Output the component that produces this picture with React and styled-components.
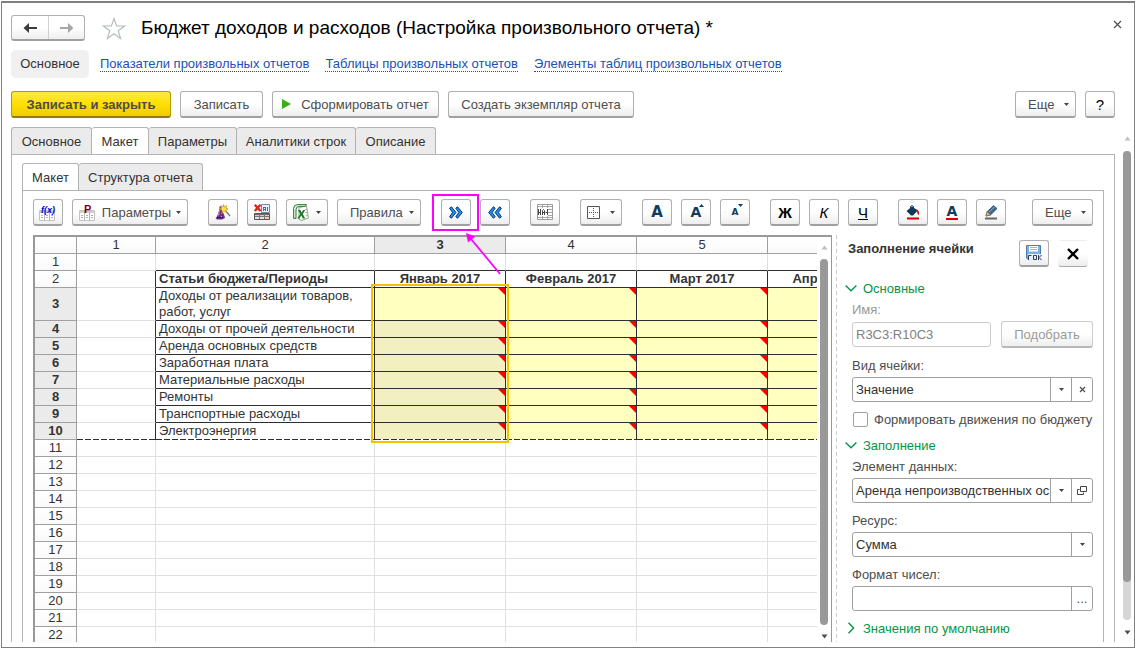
import { useState } from "react"
import styled, { createGlobalStyle, css } from "styled-components"

const months = ['Январь 2017', 'Февраль 2017', 'Март 2017', 'Апрель 2017']

const articles = [
    'Доходы от реализации товаров, работ, услуг',
    'Доходы от прочей деятельности',
    'Аренда основных средств',
    'Заработная плата',
    'Материальные расходы',
    'Ремонты',
    'Транспортные расходы',
    'Электроэнергия',
]

const emptyRows = Array.from({ length: 12 }, (_, i) => i + 11)

export default function App() {
    const [movements, setMovements] = useState(false)

    return (
        <>
            <GlobalStyle />
            <Window>
                <TitleRow>
                    <NavButtons>
                        <NavButton aria-label="Назад"><ArrowIcon color="#3c3c3c" /></NavButton>
                        <NavButton aria-label="Вперед"><ArrowIcon color="#a6a6a6" flip /></NavButton>
                    </NavButtons>
                    <StarIcon />
                    <Title>Бюджет доходов и расходов (Настройка произвольного отчета) *</Title>
                    <CloseButton aria-label="Закрыть"><CrossIcon size={9} width={1.2} /></CloseButton>
                </TitleRow>

                <LinksRow>
                    <CurrentLink>Основное</CurrentLink>
                    <Link href="#indicators">Показатели произвольных отчетов</Link>
                    <Link href="#tables">Таблицы произвольных отчетов</Link>
                    <Link href="#elements">Элементы таблиц произвольных отчетов</Link>
                </LinksRow>

                <CommandRow>
                    <Button $primary $w={160}>Записать и закрыть</Button>
                    <Button $w={83}>Записать</Button>
                    <Button $w={167}><PlayIcon />Сформировать отчет</Button>
                    <Button $w={186}>Создать экземпляр отчета</Button>
                    <Spacer />
                    <Button $w={61} $menu>Еще<Caret /></Button>
                    <Button $w={30} $dark>?</Button>
                </CommandRow>

                <Main>
                    <TabsArea>
                        <Tabs>
                            <Tab $w={81}>Основное</Tab>
                            <Tab $w={57} $active>Макет</Tab>
                            <Tab $w={88}>Параметры</Tab>
                            <Tab $w={119}>Аналитики строк</Tab>
                            <Tab $w={80}>Описание</Tab>
                        </Tabs>
                        <Panel>
                            <Tabs>
                                <Tab $w={57} $active>Макет</Tab>
                                <Tab $w={124}>Структура отчета</Tab>
                            </Tabs>
                            <Panel>
                                <Toolbar />
                                <Body>
                                    <Sheet />
                                    <Divider />
                                    <Side movements={movements} setMovements={setMovements} />
                                </Body>
                            </Panel>
                        </Panel>
                    </TabsArea>
                    <PageScroll>
                        <Triangle up />
                        <Track><Thumb $part={92} /></Track>
                        <Triangle />
                    </PageScroll>
                </Main>
            </Window>
        </>
    )
}

function Toolbar() {
    return (
        <ToolRow>
            <Groups>
                <Group>
                    <Button $w={30} aria-label="Формула"><TableTextIcon text="f(x)" color="#0000d8" /></Button>
                    <Button $w={116} $menu><TableTextIcon text="P" color="#7a0019" />Параметры<Caret /></Button>
                </Group>
                <Group>
                    <Button $w={30} aria-label="Мастер"><WizardIcon /></Button>
                    <Button $w={30} aria-label="Очистить"><ClearTableIcon /></Button>
                    <Button $w={42} $menu aria-label="Excel"><ExcelIcon /><Caret /></Button>
                    <Button $w={84} $menu>Правила<Caret /></Button>
                </Group>
                <Group>
                    <Marked>
                        <Button $w={30} aria-label="Развернуть"><ChevronsIcon /></Button>
                        <MarkBox />
                        <MarkArrow viewBox="0 0 40 44">
                            <path d="M36 42L7 7" stroke="#f0f" strokeWidth="1.8" fill="none" />
                            <path d="M2 1L11.5 4.5L4 10.5Z" fill="#f0f" />
                        </MarkArrow>
                    </Marked>
                    <Button $w={30} aria-label="Свернуть"><ChevronsIcon left /></Button>
                </Group>
                <Group>
                    <Button $w={30} aria-label="Имена"><NamesIcon /></Button>
                </Group>
                <Group>
                    <Button $w={42} $menu aria-label="Границы"><BorderIcon /><Caret /></Button>
                </Group>
                <Group>
                    <Button $w={30}><Letter $size={15}>А</Letter></Button>
                    <Button $w={30}><Letter $size={14}>А</Letter><SmallMark up /></Button>
                    <Button $w={30}><Letter $size={9}>А</Letter><SmallMark /></Button>
                </Group>
                <Group>
                    <Button $w={30} $dark><b>Ж</b></Button>
                    <Button $w={30} $dark><i>К</i></Button>
                    <Button $w={30} $dark><u>Ч</u></Button>
                </Group>
                <Group>
                    <Button $w={30} aria-label="Цвет фона"><FillIcon /></Button>
                    <Button $w={30}><ColorLetter>А</ColorLetter></Button>
                    <Button $w={30} aria-label="Цвет рамки"><PencilIcon /></Button>
                </Group>
            </Groups>
            <Button $w={61} $menu>Еще<Caret /></Button>
        </ToolRow>
    )
}

function Sheet() {
    return (
        <SheetFrame>
            <SheetView>
                <Table>
                    <colgroup>
                        <Col $w={42} />
                        <Col $w={79} />
                        <Col $w={219} />
                        <Col $w={131} />
                        <Col $w={131} />
                        <Col $w={131} />
                        <col />
                    </colgroup>
                    <thead>
                        <tr>
                            <Head />
                            {[1, 2, 3, 4, 5, 6].map(n => <Head key={n} $selected={n === 3}>{n}</Head>)}
                        </tr>
                    </thead>
                    <tbody>
                        <tr>
                            <Head>1</Head>
                            <Cell />
                            <Cell $bottom />
                            {months.map(m => <Cell key={m} $bottom />)}
                        </tr>
                        <tr>
                            <Head>2</Head>
                            <Cell $right />
                            <Cell $right $bottom $bold>Статьи бюджета/Периоды</Cell>
                            {months.map(m => <Cell key={m} $right $bottom $bold $center>{m}</Cell>)}
                        </tr>
                        {articles.map((name, i) => {
                            const last = i === articles.length - 1
                            return (
                                <tr key={name}>
                                    <Head $selected>{i + 3}</Head>
                                    <Cell $right $dashed={last} />
                                    <Cell $right $bottom $dashed={last}>{name}</Cell>
                                    {months.map((m, j) => (
                                        <Cell key={m} $right $bottom $dashed={last} $fill={j === 0 && i > 0 ? '#f2f0c0' : '#ffffc0'}>
                                            <Corner />
                                            {i === 0 && j === 0 && <Selection />}
                                        </Cell>
                                    ))}
                                </tr>
                            )
                        })}
                        {emptyRows.map(n => (
                            <tr key={n}>
                                <Head>{n}</Head>
                                <Cell />
                                <Cell />
                                {months.map(m => <Cell key={m} />)}
                            </tr>
                        ))}
                    </tbody>
                </Table>
            </SheetView>
            <SheetScroll>
                <Triangle up />
                <Track $plain><Thumb $part={100} /></Track>
                <Triangle />
            </SheetScroll>
        </SheetFrame>
    )
}

function Side({ movements, setMovements }) {
    return (
        <SidePanel>
            <SideHeader>
                <SideTitle>Заполнение ячейки</SideTitle>
                <Button $w={30} aria-label="Сохранить"><SaveIcon /></Button>
                <Button $w={30} $flat aria-label="Закрыть панель"><CrossIcon size={12} width={2.4} /></Button>
            </SideHeader>

            <Section><SectionChevron />Основные</Section>
            <Fields>
                <Label htmlFor="name" $muted>Имя:</Label>
                <NameRow>
                    <Combo $muted><TextBox id="name" defaultValue="R3C3:R10C3" disabled /></Combo>
                    <Button $w={92} $muted>Подобрать</Button>
                </NameRow>
                <Label htmlFor="kind">Вид ячейки:</Label>
                <Combo>
                    <Select id="kind"><option>Значение</option></Select>
                    <Segment as="span"><Caret /></Segment>
                    <Segment aria-label="Очистить"><CrossIcon size={7} width={1.2} /></Segment>
                </Combo>
                <CheckRow>
                    <Check type="checkbox" checked={movements} onChange={e => setMovements(e.target.checked)} />
                    Формировать движения по бюджету
                </CheckRow>
            </Fields>

            <Section><SectionChevron />Заполнение</Section>
            <Fields>
                <Label htmlFor="element">Элемент данных:</Label>
                <Combo>
                    <Select id="element"><option>Аренда непроизводственных ос</option></Select>
                    <Segment as="span"><Caret /></Segment>
                    <Segment aria-label="Открыть"><OpenIcon /></Segment>
                </Combo>
                <Label htmlFor="resource">Ресурс:</Label>
                <Combo>
                    <Select id="resource"><option>Сумма</option></Select>
                    <Segment as="span"><Caret /></Segment>
                </Combo>
                <Label htmlFor="format">Формат чисел:</Label>
                <Combo>
                    <TextBox id="format" />
                    <Segment>...</Segment>
                </Combo>
            </Fields>

            <Section><SectionChevron closed />Значения по умолчанию</Section>
        </SidePanel>
    )
}

/* ---------- icons ---------- */

const ArrowIcon = ({ color, flip }) => (
    <svg width="15" height="12" viewBox="0 0 15 12">
        <path
            d={flip ? 'M1 5H9V1L14.5 6L9 11V7H1Z' : 'M14 5H6V1L0.5 6L6 11V7H14Z'}
            fill={color}
        />
    </svg>
)

const StarIcon = () => (
    <Star viewBox="0 0 24 23">
        <path
            d="M12 1.5L14.6 9H22.6L16.2 13.7L18.6 21.5L12 16.8L5.4 21.5L7.8 13.7L1.4 9H9.4Z"
            fill="#fff" stroke="#b4b9be" strokeWidth="1.1"
        />
    </Star>
)

const CrossIcon = ({ size, width }) => (
    <svg width={size} height={size} viewBox={`0 0 ${size} ${size}`}>
        <path d={`M1 1L${size - 1} ${size - 1}M${size - 1} 1L1 ${size - 1}`} stroke={width > 2 ? '#000' : '#4d4d4d'} strokeWidth={width} />
    </svg>
)

const PlayIcon = () => (
    <Play viewBox="0 0 9 10"><path d="M0 0L9 5L0 10Z" fill="#39ad12" /></Play>
)

const Caret = () => (
    <CaretSvg viewBox="0 0 5 3"><path d="M0 0H5L2.5 3Z" fill="#444" /></CaretSvg>
)

const Triangle = ({ up }) => (
    <svg width="7" height="5" viewBox="0 0 7 5">
        <path d={up ? 'M0.5 4.5L3.5 0.5L6.5 4.5Z' : 'M0.5 0.5L3.5 4.5L6.5 0.5Z'} fill={up ? '#bdbdbd' : '#4d4d4d'} />
    </svg>
)

const SmallMark = ({ up }) => (
    <Mark viewBox="0 0 5 3"><path d={up ? 'M0 3H5L2.5 0Z' : 'M0 0H5L2.5 3Z'} fill="#123c5c" /></Mark>
)

const TableTextIcon = ({ text, color }) => (
    <svg width="18" height="17" viewBox="0 0 18 17">
        <path d="M0.5 6.5H15.5V16.5H0.5Z" fill="#fff" stroke="#c4c4c4" />
        <path d="M1 7H15V9H1Z" fill="#cfcfcf" />
        <path d="M5.5 7V16M10.5 7V16" stroke="#b5b5b5" />
        <path d="M2 11.5H4M2 13.5H4M7 11.5H9M7 13.5H9M12 11.5H14M12 13.5H14" stroke="#b0b0b0" />
        <text
            x={text === 'P' ? 5 : 2} y="9"
            fontSize={text === 'P' ? 11 : 9}
            fontWeight="bold"
            fontStyle={text === 'P' ? 'normal' : 'italic'}
            fill={color}
        >{text}</text>
    </svg>
)

const WizardIcon = () => (
    <svg width="16" height="16" viewBox="0 0 16 16">
        <path d="M5 1.5L6 3L9.5 12L10 14L7 15.5H2L0.5 14L2 12.5L4 7Z" fill="#6b2c91" />
        <path d="M5 2L4.5 7L3 12" stroke="#b184cf" fill="none" />
        <path d="M2 13.5H8" stroke="#3d1259" />
        <path d="M3.5 10.5H4.5M6 9.5H7M6 12.5H7" stroke="#f0a830" />
        <path d="M10 6L15 12" stroke="#777" strokeWidth="1.3" />
        <path d="M8.5 0.5L9.3 3L11.8 1.7L10.8 4L13 5L10.8 6L11.3 8.3L8.8 7L7 8.6L7 6L4.5 5L7 4L6.2 1.6L8 3Z" fill="#ffe640" stroke="#d09000" strokeWidth="0.7" />
    </svg>
)

const ClearTableIcon = () => (
    <svg width="16" height="16" viewBox="0 0 16 16">
        <path d="M7.5 0.5H15.5V8.5H7.5Z" fill="#e9f1fb" stroke="#6d88a8" />
        <path d="M9.5 3V7M9.5 3.5H12M11.5 3V7M9.5 5.5H12M13.5 3V7" stroke="#4a6c96" />
        <path d="M0.5 9.5H15.5V15.5H0.5Z" fill="#e4e4e4" stroke="#555" />
        <path d="M1 10.5H15" stroke="#6d6d6d" strokeWidth="1.4" />
        <path d="M1 12.5H15M5.5 10V15M10.5 10V15" stroke="#777" />
        <path d="M11 11H15V12H11ZM11 13H15V15H11Z" fill="#fbc9a4" />
        <path d="M0.8 0.8L6.6 7M6.6 0.8L0.8 7" stroke="#d9281e" strokeWidth="2.4" />
    </svg>
)

const ExcelIcon = () => (
    <svg width="16" height="17" viewBox="0 0 16 17">
        <path d="M6 3.5L13.5 2L15.4 14L9 16.3L6 15.5Z" fill="#fff" stroke="#8da08d" />
        <path d="M12 5.5H14M12.4 8.5H14.4M12.8 11.5H14.8" stroke="#a9b8a9" />
        <path d="M0.6 14.4V4.5Q0.6 0.6 4.5 0.6H13.5L12 2.4H6.4Q3 2.4 3 5.8V14.4Z" fill="#dceeda" stroke="#2e7d32" strokeWidth="1" />
        <path d="M5 6H7.4L8.6 8.6L10.2 6H12.3L9.8 10L12.2 14.4H9.8L8.3 11.6L6.4 14.4H4.2L7.2 10Z" fill="#1f7a29" />
    </svg>
)

const ChevronsIcon = ({ left }) => (
    <svg width="14" height="13" viewBox="0 0 14 13">
        <g transform={left ? 'matrix(-1 0 0 1 14 0)' : undefined} fill="#1e90f5" stroke="#06386e" strokeWidth="1">
            <path d="M0.6 2.2L2.4 0.8L7 6.5L2.4 12.2L0.6 10.8L3.6 6.5Z" />
            <path d="M6.8 2.2L8.6 0.8L13.3 6.5L8.6 12.2L6.8 10.8L9.8 6.5Z" />
        </g>
    </svg>
)

const NamesIcon = () => (
    <svg width="16" height="16" viewBox="0 0 16 16">
        <path d="M0.5 0.5H15.5V15.5H0.5Z" fill="#fff" stroke="#9a9a9a" />
        <path d="M1 2.5H15M1 13.5H15M5.5 1V15M10.5 1V15M11 5.5H15M11 8.5H15M11 11.5H15" stroke="#a5a5a5" />
        <path d="M1 4H11V12H1Z" fill="#fff" />
        <path d="M1.5 5V11M1 8.5H3.5M3.5 5V11M10.5 5V11M8.5 8.5H10.5M5.5 11V6.5L6.5 5.5L7.5 6.5V11M5.5 8.5H7.5" stroke="#444" fill="none" />
    </svg>
)

const BorderIcon = () => (
    <svg width="13" height="13" viewBox="0 0 13 13">
        <path d="M0.5 0.5H12.5V12.5H0.5Z" fill="#fff" stroke="#555" />
        <path d="M2 6.5H12M6.5 2V12" stroke="#555" strokeDasharray="1 1" />
    </svg>
)

const FillIcon = () => (
    <svg width="14" height="15" viewBox="0 0 14 15">
        <path d="M0.5 6L6 1.5L11.8 5.5L7 10.5H5Z" fill="#12395a" />
        <path d="M4.5 4V1.5Q6 -0.5 7.5 1.5V3" stroke="#12395a" fill="none" />
        <path d="M10 4.5Q13.5 4.5 13 10Q11 9 11 6.5Z" fill="#c81010" />
        <path d="M1 12.5H13V14.5H1Z" fill="#d90000" />
    </svg>
)

const PencilIcon = () => (
    <svg width="14" height="15" viewBox="0 0 14 15">
        <path d="M2 11L3.2 6.6L9.6 0.6L13 3.6L6.5 10Z" fill="#3a6a90" stroke="#234a69" strokeWidth="0.8" />
        <path d="M2 11L3.2 6.6L6.5 10Z" fill="#e8b860" stroke="#8a6a30" strokeWidth="0.6" />
        <path d="M5 7L10.8 1.8" stroke="#8fb4d0" />
        <path d="M1 12.5H13V14.5H1Z" fill="#666" />
    </svg>
)

const SaveIcon = () => (
    <svg width="16" height="16" viewBox="0 0 16 16">
        <path d="M0.5 0.5H14.5V14.5H2L0.5 13Z" fill="#7fb0de" stroke="#4a7db4" />
        <path d="M3 1H12V6.5H3Z" fill="#fff" />
        <path d="M4 2.5H11M4 4.5H11" stroke="#9db8d6" />
        <path d="M2 9H16V16H2Z" fill="#e6eef8" />
        <path d="M2.5 15V10.5H5.5M7.5 10.5H10.5V14.5H7.5ZM12.5 10V15M15.5 10L13 12.5L15.5 15" stroke="#333f52" fill="none" />
    </svg>
)

const OpenIcon = () => (
    <svg width="10" height="9" viewBox="0 0 10 9">
        <path d="M3.5 0.5H9.5V5.5H3.5Z" fill="none" stroke="#444" />
        <path d="M2.5 3.5H0.5V8.5H6.5V6.5" fill="none" stroke="#444" />
    </svg>
)

const SectionChevron = ({ closed }) => (
    <ChevronSvg viewBox="0 0 12 12">
        <path d={closed ? 'M3.5 0.8L8.6 6L3.5 11.2' : 'M0.6 3.5L6 8.8L11.4 3.5'} fill="none" stroke="#009646" strokeWidth="1.4" />
    </ChevronSvg>
)

/* ---------- styles ---------- */

const GlobalStyle = createGlobalStyle`
*{
box-sizing:border-box;
}
body{
margin:0;
background:#fff;
}
body,button,input,select{
font-family:"Liberation Sans",Arial,sans-serif;
font-size:13px;
color:#4d4d4d;
}
`

const Window = styled.div`
display:flex;
flex-direction:column;
height:calc(100vh - 1px);
margin:1px 0 0 1px;
padding:12px 0 5px 9px;
border:1px solid #808080;
border-top-width:2px;
overflow:hidden;
`

const TitleRow = styled.div`
display:flex;
align-items:center;
height:26px;
padding-right:12px;
`

const NavButtons = styled.div`
display:flex;
height:26px;
border:1px solid #b0b0b0;
border-bottom:2px solid #a0a0a0;
border-radius:3px;
background:linear-gradient(#fff,#fff 50%,#eee);
`

const NavButton = styled.button`
display:flex;
align-items:center;
justify-content:center;
width:36px;
padding:0;
border:0;
background:none;
& + &{
border-left:1px solid #d0d0d0;
}
`

const Star = styled.svg`
width:24px;
height:23px;
margin:0 15px 0 17px;
`

const Title = styled.h1`
flex:1;
margin:0;
font-size:19px;
font-weight:normal;
line-height:26px;
color:#000;
white-space:nowrap;
`

const CloseButton = styled.button`
display:flex;
align-self:flex-start;
padding:5px 0;
border:0;
background:none;
`

const LinksRow = styled.nav`
display:flex;
align-items:center;
gap:16px;
height:28px;
margin-top:9px;
`

const CurrentLink = styled.span`
width:78px;
margin-right:-5px;
border-radius:5px;
background:#f0f0f0;
line-height:28px;
text-align:center;
color:#333;
`

const Link = styled.a`
border-bottom:1px dotted #1a50b8;
line-height:14px;
color:#1a50b8;
text-decoration:none;
white-space:nowrap;
`

const CommandRow = styled.div`
display:flex;
gap:9px;
margin-top:13px;
margin-right:19px;
`

const Spacer = styled.div`
flex:1;
`

const Button = styled.button`
position:relative;
display:flex;
align-items:center;
justify-content:center;
flex:none;
width:${p => p.$w}px;
height:27px;
padding:0;
border:1px solid #b0b0b0;
border-bottom:2px solid #a0a0a0;
border-radius:3px;
background:linear-gradient(#fff,#fff 50%,#ededed);
white-space:nowrap;
${p => p.$menu && css`
justify-content:space-between;
padding:0 6px 0 ${p.$w === 61 || p.$w === 84 ? 12 : 6}px;
`}
${p => p.$primary && css`
border-color:#b39b00;
border-bottom-color:#8f7c00;
background:linear-gradient(#ffe94a,#ffe000 50%,#efcb00);
font-weight:bold;
`}
${p => p.$dark && css`
font-size:15px;
color:#000;
`}
${p => p.$muted && css`
border-color:#ccc;
border-bottom-color:#b8b8b8;
color:#999;
`}
${p => p.$flat && css`
border-color:transparent;
border-bottom:1px solid #aaa;
`}
`

const Play = styled.svg`
width:9px;
height:10px;
margin-right:10px;
`

const CaretSvg = styled.svg`
width:5px;
height:3px;
`

const Mark = styled.svg`
position:absolute;
top:4px;
right:6px;
width:5px;
height:3px;
`

const Letter = styled.b`
font-family:"DejaVu Sans",sans-serif;
font-size:${p => p.$size}px;
color:#123c5c;
`

const ColorLetter = styled.b`
width:12px;
border-bottom:2px solid #d90000;
font-family:"DejaVu Sans",sans-serif;
font-size:14px;
line-height:13px;
color:#123c5c;
`

const Main = styled.div`
display:flex;
flex:1;
min-height:0;
margin-top:9px;
`

const TabsArea = styled.div`
display:flex;
flex:1;
flex-direction:column;
min-width:0;
`

const Tabs = styled.div`
display:flex;
flex:none;
height:27px;
`

const Tab = styled.button`
width:${p => p.$w}px;
height:27px;
margin:0;
padding:0;
border:1px solid #b3b3b3;
border-bottom:0;
border-radius:3px 3px 0 0;
background:#ebebeb;
color:#333;
white-space:nowrap;
& + &{
border-left:0;
}
${p => p.$active && css`
height:28px;
background:#fff;
`}
`

const Panel = styled.div`
display:flex;
flex:1;
flex-direction:column;
min-height:0;
padding:8px 10px 0;
border:1px solid #b3b3b3;
border-bottom:0;
`

const PageScroll = styled.div`
display:flex;
flex-direction:column;
align-items:center;
gap:10px;
width:19px;
padding:9px 0 7px 5px;
`

const Track = styled.div`
flex:1;
width:8px;
border-radius:4px;
background:${p => p.$plain ? 'none' : '#d6d6d6'};
`

const Thumb = styled.div`
height:${p => p.$part}%;
border-radius:4px;
background:#999;
`

const ToolRow = styled.div`
display:flex;
justify-content:space-between;
`

const Groups = styled.div`
display:flex;
gap:20px;
`

const Group = styled.div`
display:flex;
gap:9px;
`

const Marked = styled.div`
position:relative;
`

const MarkBox = styled.div`
position:absolute;
z-index:2;
top:-5px;
left:-9px;
width:47px;
height:37px;
border:2px solid #f0f;
pointer-events:none;
`

const MarkArrow = styled.svg`
position:absolute;
z-index:2;
top:33px;
left:23px;
width:40px;
height:44px;
pointer-events:none;
`

const Body = styled.div`
display:flex;
flex:1;
min-height:0;
margin-top:9px;
`

const SheetFrame = styled.div`
display:flex;
flex:1;
min-width:0;
border:solid #999;
border-width:2px 1px 0 2px;
`

const SheetView = styled.div`
flex:1;
min-width:0;
overflow:hidden;
`

const SheetScroll = styled.div`
display:flex;
flex-direction:column;
align-items:center;
gap:9px;
width:14px;
padding:8px 0 3px;
`

const Table = styled.table`
width:100%;
min-width:864px;
table-layout:fixed;
border-collapse:separate;
border-spacing:0;
line-height:16px;
color:#333;
`

const Col = styled.col`
width:${p => p.$w}px;
`

const Head = styled.th`
height:17px;
padding:0;
border:solid #a0a0a0;
border-width:0 1px 1px 0;
background:${p => p.$selected ? '#ebebeb' : 'linear-gradient(#fff,#fafafa)'};
font-weight:${p => p.$selected ? 'bold' : 'normal'};
`

const Cell = styled.td`
position:relative;
height:17px;
padding:0 3px;
border:solid #e0e0e0;
border-width:0 1px 1px 0;
background-color:${p => p.$fill || '#fff'};
font-weight:${p => p.$bold ? 'bold' : 'normal'};
text-align:${p => p.$center ? 'center' : 'left'};
${p => p.$right && css`border-right-color:#2e2e2e;`}
${p => p.$bottom && css`border-bottom-color:#2e2e2e;`}
${p => p.$dashed && css`
border-bottom:0;
padding-bottom:1px;
background-image:repeating-linear-gradient(90deg,#2e2e2e 0 6px,#fff 6px 8px);
background-size:100% 1px;
background-position:0 100%;
background-repeat:no-repeat;
`}
`

const Corner = styled.span`
position:absolute;
top:0;
right:0;
width:7px;
height:7px;
background:#f00;
clip-path:polygon(0 0,100% 0,100% 100%);
`

const Selection = styled.span`
position:absolute;
z-index:1;
top:-4px;
left:-4px;
width:138px;
height:159px;
border:2px solid #f9be00;
`

const Divider = styled.div`
width:1px;
margin:0 8px 0 4px;
background:repeating-linear-gradient(#ccc 0 4px,#fff 4px 7px);
`

const SidePanel = styled.div`
flex:none;
width:248px;
padding-top:5px;
`

const SideHeader = styled.div`
display:flex;
gap:9px;
padding:0 5px 0 3px;
margin-bottom:11px;
`

const SideTitle = styled.h2`
flex:1;
margin:0;
font-size:13px;
line-height:18px;
color:#333;
white-space:nowrap;
`

const Section = styled.div`
display:flex;
align-items:center;
height:20px;
color:#009646;
`

const ChevronSvg = styled.svg`
width:12px;
height:12px;
margin-right:6px;
`

const Fields = styled.div`
display:flex;
flex-direction:column;
padding:3px 0 7px 7px;
`

const Label = styled.label`
margin-bottom:3px;
line-height:17px;
color:${p => p.$muted ? '#999' : '#4d4d4d'};
* + &{
margin-top:9px;
}
`

const NameRow = styled.div`
display:flex;
align-items:center;
gap:10px;
`

const Combo = styled.div`
display:flex;
flex:1 0 auto;
min-width:0;
height:25px;
border:1px solid ${p => p.$muted ? '#ccc' : '#a0a0a0'};
border-radius:3px;
background:#fff;
`

const TextBox = styled.input`
flex:1;
width:0;
min-width:0;
padding:0 3px;
border:0;
outline:0;
background:none;
color:#333;
&:disabled{
color:#808080;
}
`

const Select = styled.select`
flex:1;
width:0;
min-width:0;
padding:0 0 0 3px;
border:0;
outline:0;
background:none;
appearance:none;
color:#333;
`

const Segment = styled.button`
display:flex;
align-items:center;
justify-content:center;
width:21px;
padding:0;
border:0;
border-left:1px solid #a0a0a0;
background:none;
`

const CheckRow = styled.label`
display:flex;
align-items:center;
gap:6px;
height:17px;
margin-top:9px;
white-space:nowrap;
`

const Check = styled.input`
appearance:none;
width:15px;
height:15px;
margin:0 0 0 1px;
border:1px solid #a0a0a0;
border-radius:2px;
background:#fff;
&:checked{
background:#009646;
}
`
